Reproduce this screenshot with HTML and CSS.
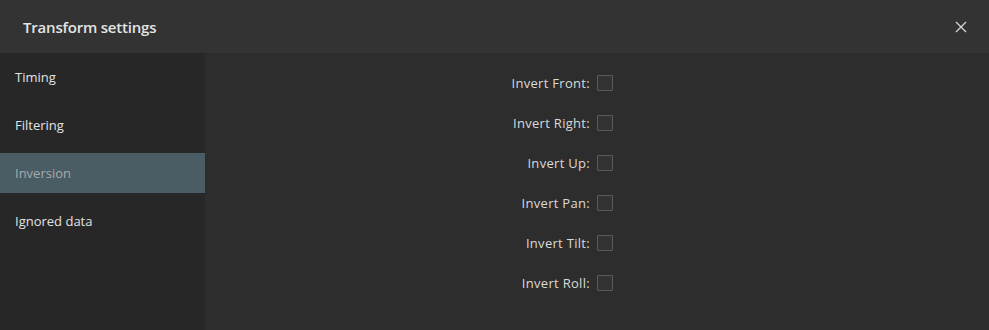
FILE: index.html
```html
<!DOCTYPE html>
<html lang="en">
<head>
    <meta charset="UTF-8">
    <meta name="viewport" content="width=device-width, initial-scale=1.0">
    <title>Transform settings</title>
    <link rel="stylesheet" href="styles.css">
</head>
<body>
    <div class="dialog">
        <div class="header">
            <h1>Transform settings</h1>
            <button class="close-btn" aria-label="Close">
                <svg width="12" height="12" viewBox="0 0 12 12">
                    <path d="M1 1 L11 11 M11 1 L1 11" stroke="#d6d6d6" stroke-width="1.3" fill="none"/>
                </svg>
            </button>
        </div>

        <div class="content">
            <div class="sidebar">
                <div class="nav-item">Timing</div>
                <div class="nav-item">Filtering</div>
                <div class="nav-item active">Inversion</div>
                <div class="nav-item">Ignored data</div>
            </div>

            <div class="main">
                <div class="row">
                    <label class="row-label">Invert Front:</label>
                    <span class="checkbox"></span>
                </div>
                <div class="row">
                    <label class="row-label">Invert Right:</label>
                    <span class="checkbox"></span>
                </div>
                <div class="row">
                    <label class="row-label">Invert Up:</label>
                    <span class="checkbox"></span>
                </div>
                <div class="row">
                    <label class="row-label">Invert Pan:</label>
                    <span class="checkbox"></span>
                </div>
                <div class="row">
                    <label class="row-label">Invert Tilt:</label>
                    <span class="checkbox"></span>
                </div>
                <div class="row">
                    <label class="row-label">Invert Roll:</label>
                    <span class="checkbox"></span>
                </div>
            </div>
        </div>
    </div>
</body>
</html>
```

FILE: styles.css
```css
body {
    margin: 0;
    padding: 0;
    background-color: #2d2d2d;
    color: #dcdcdc;
    font-family: "Open Sans", "Noto Sans", sans-serif;
    font-size: 13px;
    height: 100vh;
    overflow: hidden;
}

.dialog {
    display: flex;
    flex-direction: column;
    height: 100%;
}

.header {
    height: 53px;
    background-color: #333333;
    display: flex;
    align-items: center;
    justify-content: space-between;
    padding: 0 22px 0 23px;
    flex-shrink: 0;
}

h1 {
    margin: 0;
    font-size: 15px;
    font-weight: 600;
    color: #e4e4e4;
    letter-spacing: -0.2px;
}

.close-btn {
    background: none;
    border: none;
    padding: 0;
    width: 12px;
    height: 12px;
    cursor: pointer;
    display: flex;
}

.content {
    display: flex;
    flex: 1;
}

.sidebar {
    width: 205px;
    background-color: #272727;
    padding-top: 4px;
    display: flex;
    flex-direction: column;
    gap: 8px;
}

.nav-item {
    height: 40px;
    line-height: 40px;
    padding-left: 15px;
    color: #e2e2e2;
}

.nav-item.active {
    background-color: #4a5c64;
    color: #a3acb0;
}

.main {
    flex: 1;
    padding-top: 10px;
}

.row {
    display: grid;
    grid-template-columns: 1fr 1fr;
    height: 40px;
    align-items: center;
}

.row-label {
    text-align: right;
    padding-right: 7px;
    color: #dadada;
    letter-spacing: 0.3px;
}

.checkbox {
    width: 14px;
    height: 14px;
    border: 1px solid #5a5a5a;
    border-radius: 1px;
    background-color: #333333;
}
```
